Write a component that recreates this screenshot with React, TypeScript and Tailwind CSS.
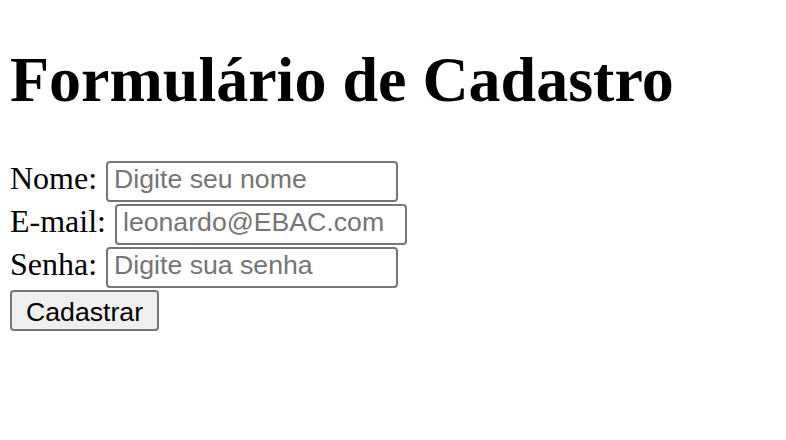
import React from "react";

const serif = { fontFamily: '"Liberation Serif", "Times New Roman", serif' };
const sans = { fontFamily: '"Liberation Sans", Arial, sans-serif' };

function Row({ label, placeholder, type }: { label: string; placeholder: string; type: string }) {
  return (
    <div className="flex h-[43px] items-start gap-[9px]">
      <label className="mt-[1px] text-[32px] leading-[32px] text-black" style={serif}>
        {label}
      </label>
      <input
        type={type}
        placeholder={placeholder}
        className="box-border h-[41px] w-[292px] rounded-[4px] border-2 border-[#767676] bg-white pb-[5px] pl-[6px] pr-[4px] pt-[1px] text-[26.67px] text-black placeholder:text-[#757575] outline-none"
        style={sans}
      />
    </div>
  );
}

export default function App() {
  return (
    <div className="min-h-[440px] w-[786px] bg-white pl-[10px] pt-[44px]">
      <h1 className="m-0 text-[64px] font-bold leading-[71px] text-black" style={serif}>
        Formulário de Cadastro
      </h1>
      <form className="mt-[46px] flex flex-col" onSubmit={(e) => e.preventDefault()}>
        <Row label="Nome:" placeholder="Digite seu nome" type="text" />
        <Row label="E-mail:" placeholder="leonardo@EBAC.com" type="email" />
        <Row label="Senha:" placeholder="Digite sua senha" type="password" />
        <div className="flex">
          <button
            type="submit"
            className="box-border h-[41px] rounded-[4px] border-2 border-[#767676] bg-[#efefef] px-[14px] pb-[3px] text-[26.67px] text-black"
            style={sans}
          >
            Cadastrar
          </button>
        </div>
      </form>
    </div>
  );
}
